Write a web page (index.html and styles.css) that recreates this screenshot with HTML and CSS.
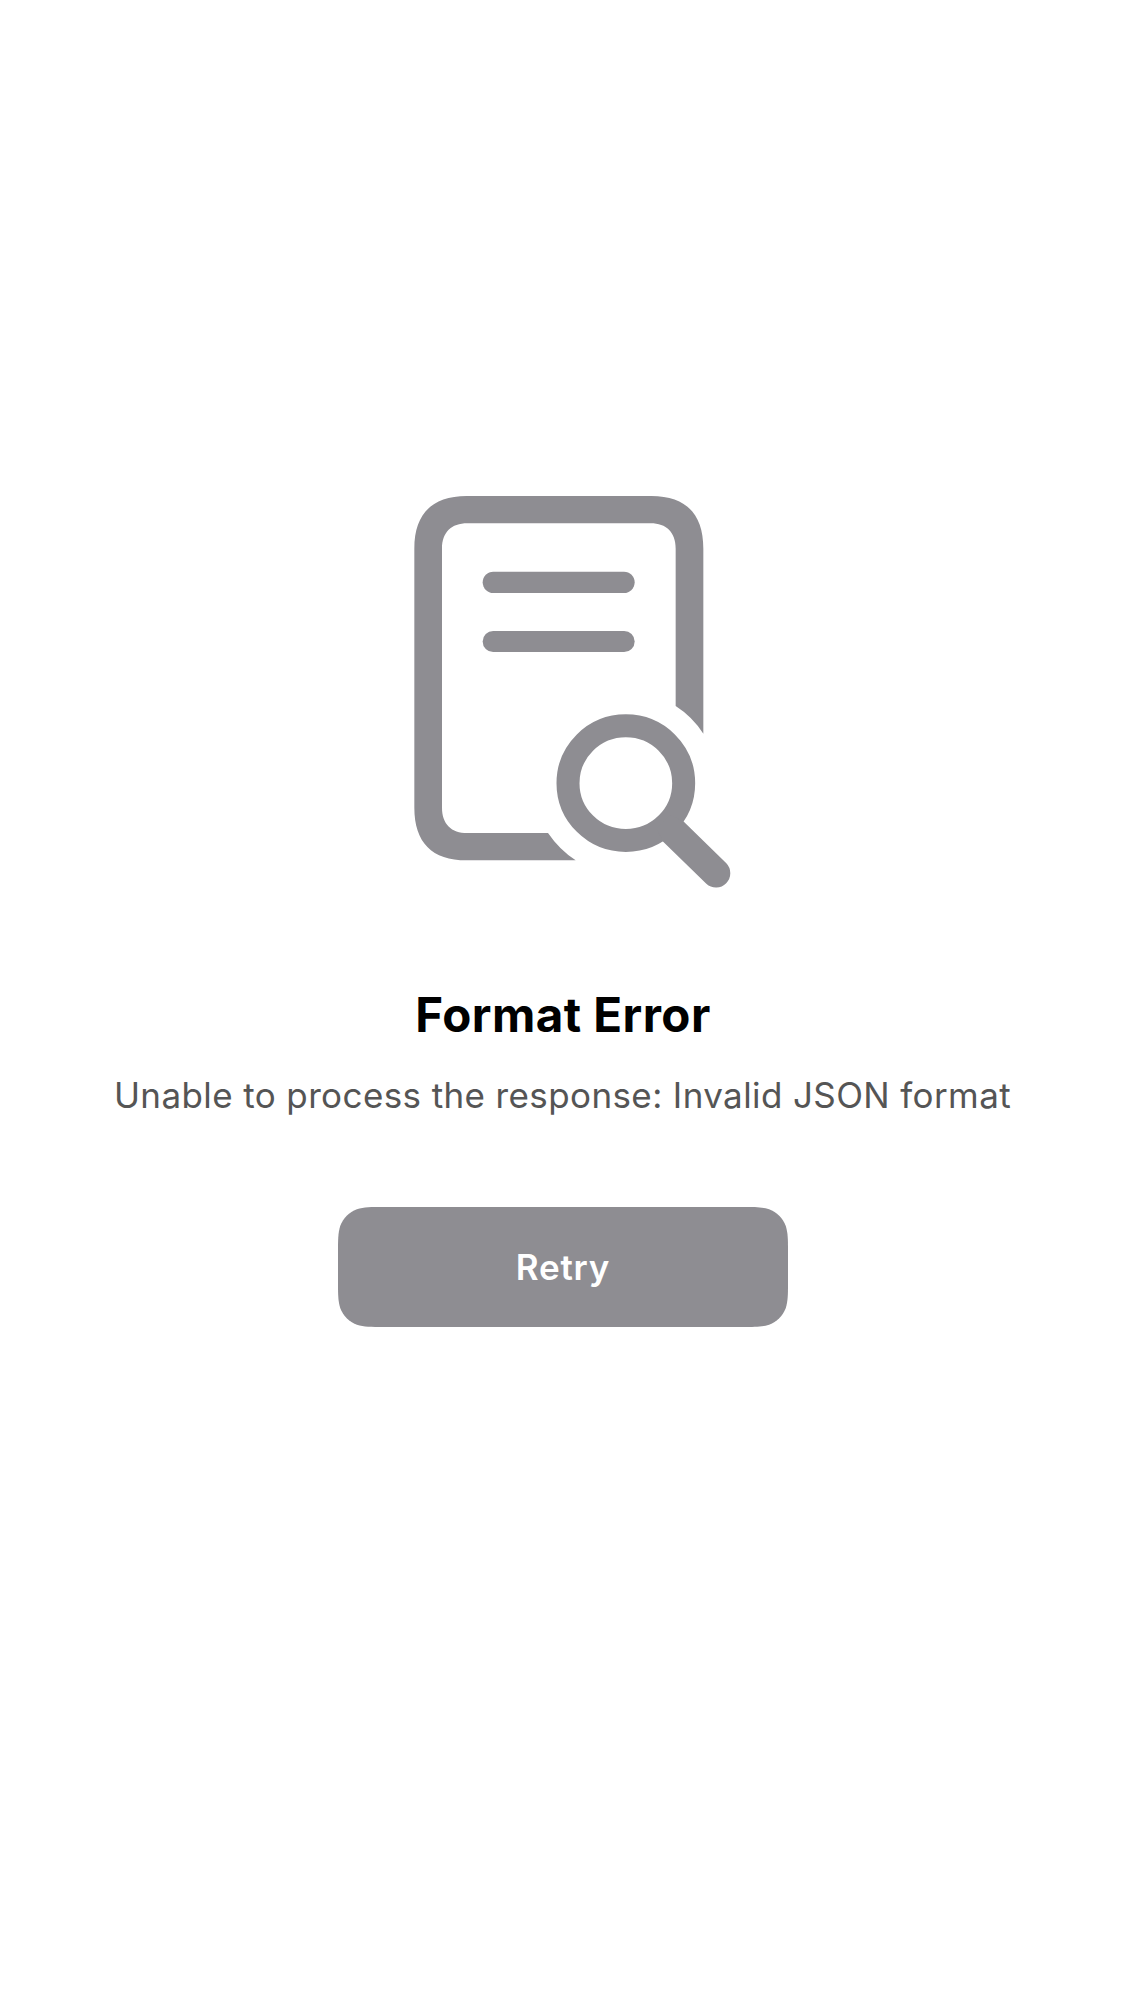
FILE: index.html
```html
<!DOCTYPE html>
<html lang="en">
<head>
<meta charset="utf-8">
<title>Format Error</title>
<link rel="stylesheet" href="styles.css">
</head>
<body>
<main class="error-view">
  <svg class="error-icon" viewBox="42 48 951 1176" aria-hidden="true">
    <path fill-rule="evenodd" d="M200 48H754C858 48 910 102 910 206V761Q877 710 827 678V206C827 157 799 130 752 130H202C154 130 126 157 126 206V983C126 1032 154 1059 202 1059H444Q478 1109 527 1141H200C96 1141 43 1087 43 983V206C43 102 96 48 200 48Z"/>
    <rect x="248" y="275" width="456" height="64" rx="32"/>
    <rect x="248" y="453" width="456" height="63" rx="31.500"/>
    <ellipse class="lens" cx="677.500" cy="909.500" rx="173.500" ry="172"/>
    <path d="M788 1084L919 1211A42.800 42.800 0 0 0 979 1150L850 1024L810 1005L770 1045Z"/>
  </svg>
  <h1 class="error-title">Format Error</h1>
  <p class="error-message">Unable to process the response: Invalid JSON format</p>
  <button class="retry" type="button">Retry</button>
</main>
</body>
</html>
```
FILE: styles.css
```css
body {
  margin: 0;
  background: #fff;
  font-family: Inter, "Liberation Sans", sans-serif;
}

.error-view {
  display: flex;
  flex-direction: column;
  align-items: center;
  box-sizing: border-box;
  min-height: 2001px;
  padding-top: 496px;
}

.error-icon {
  width: 317px;
  height: 392px;
  margin-left: 20px;
  fill: #8e8d92;
}

.lens {
  fill: none;
  stroke: #8e8d92;
  stroke-width: 69px;
}

.error-title {
  margin: 98px 0 0 1px;
  font-size: 47.5px;
  font-weight: 700;
  letter-spacing: 0.45px;
  line-height: 58px;
  white-space: nowrap;
}

.error-message {
  margin: 29px 0 0;
  color: #555;
  font-size: 35px;
  letter-spacing: 0.39px;
  line-height: 44px;
  white-space: nowrap;
}

.retry {
  width: 450px;
  height: 120px;
  margin: 90px 0 0 1px;
  padding: 0;
  border: 0;
  background: #8e8d92;
  clip-path: path("M45.900 0H404.100C417.300 0 423.900 0 431.100 2.200C438.800 5.100 444.900 11.200 447.800 18.900C450 26.100 450 32.700 450 45.900V74.100C450 87.300 450 93.900 447.800 101.100C444.900 108.800 438.800 114.900 431.100 117.800C423.900 120 417.300 120 404.100 120H45.900C32.700 120 26.100 120 18.900 117.800C11.200 114.900 5.100 108.800 2.200 101.100C0 93.900 0 87.300 0 74.100V45.900C0 32.700 0 26.100 2.200 18.900C5.100 11.200 11.200 5.100 18.900 2.200C26.100 0 32.700 0 45.900 0Z");
  color: #fff;
  font: 600 35px/44px Inter, "Liberation Sans", sans-serif;
  letter-spacing: 0.8px;
}
```
